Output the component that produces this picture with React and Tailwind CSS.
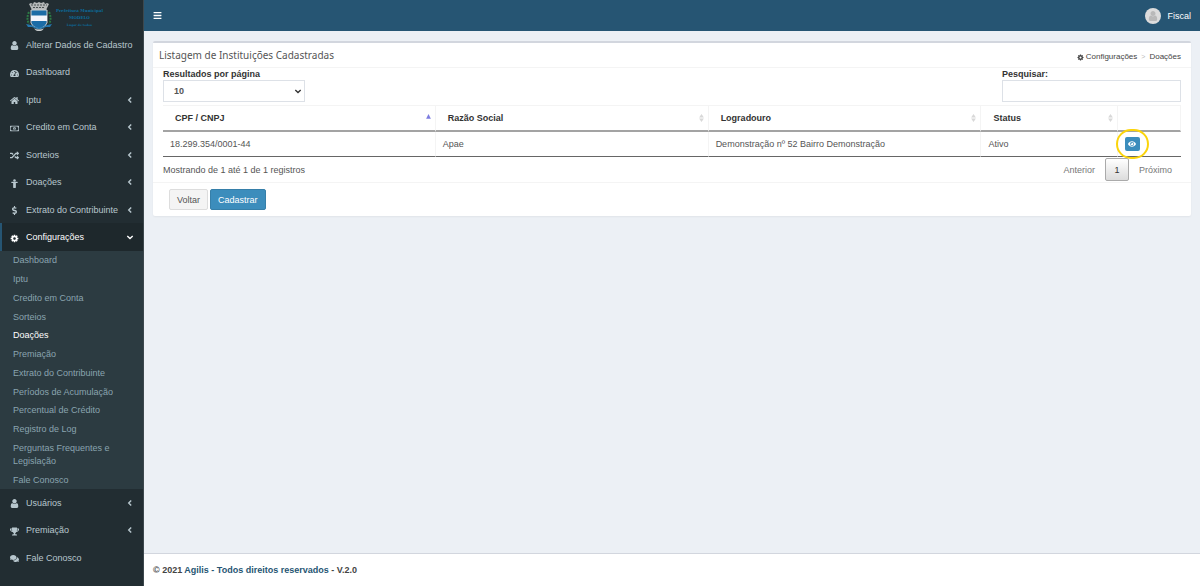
import { useState } from 'react';
import {
  FaBars,
  FaComments,
  FaDollarSign,
  FaEye,
  FaHome,
  FaRandom,
  FaRegMoneyBillAlt,
  FaTachometerAlt,
  FaTrophy,
} from 'react-icons/fa';

function UserIcon({ className }) {
  return (
    <svg viewBox="128 128 1536 1536" fill="currentColor" aria-hidden="true" className={className}>
      <path d="M1536 1399q0 109-62.5 187t-150.5 78h-854q-88 0-150.5-78t-62.5-187q0-85 8.5-160.5t31.5-152 58.5-131 94-89 134.5-34.5q131 128 313 128t313-128q76 0 134.5 34.5t94 89 58.5 131 31.5 152 8.5 160.5zm-256-887q0 159-112.5 271.5t-271.5 112.5-271.5-112.5-112.5-271.5 112.5-271.5 271.5-112.5 271.5 112.5 112.5 271.5z" />
    </svg>
  );
}

function CogIcon({ className }) {
  return (
    <svg viewBox="0 0 1792 1792" fill="currentColor" aria-hidden="true" className={className}>
      <path d="M1152 896q0-106-75-181t-181-75-181 75-75 181 75 181 181 75 181-75 75-181zm512-109v222q0 12-8 23t-20 13l-185 28q-19 54-39 91 35 50 107 138 10 12 10 25t-9 23q-27 37-99 108t-94 71q-12 0-26-9l-138-108q-44 23-91 38-16 136-29 186-7 28-36 28h-222q-14 0-24.5-8.5t-11.5-21.5l-28-184q-49-16-90-37l-141 107q-10 9-25 9-14 0-25-11-126-114-165-168-7-10-7-23 0-12 8-23 15-21 51-66.5t54-70.5q-27-50-41-99l-183-27q-13-2-21-12.5t-8-23.5v-222q0-12 8-23t19-13l186-28q14-46 39-92-40-57-107-138-10-12-10-24 0-10 9-23 26-36 98.5-107.5t94.5-71.5q13 0 26 10l138 107q44-23 91-38 16-136 29-186 7-28 36-28h222q14 0 24.5 8.5t11.5 21.5l28 184q49 16 90 37l142-107q9-9 24-9 13 0 25 10 129 119 165 170 7 8 7 22 0 12-8 23-15 21-51 66.5t-54 70.5q26 50 41 98l183 28q13 2 21 12.5t8 23.5z" />
    </svg>
  );
}

function PersonIcon({ className }) {
  return (
    <svg viewBox="0 0 20 20" fill="currentColor" aria-hidden="true" className={className}>
      <circle cx="10" cy="3.4" r="2.8" />
      <path d="M4 6h12q1.4.3 1.2 1.7-.2 1.3-1.7 1.3H13v10q0 1-1.2 1H8.2Q7 20 7 19V9H4.500Q3 9 2.800 7.700 2.600 6.300 4 6z" />
    </svg>
  );
}

function AngleIcon({ down, className }) {
  return (
    <svg
      viewBox="0 0 10 10"
      fill="none"
      stroke="currentColor"
      strokeWidth="1.4"
      aria-hidden="true"
      className={className}
    >
      <path d={down ? 'M2.300 4L5 6.500 7.700 4' : 'M6.200 2.400L3.700 5l2.500 2.600'} />
    </svg>
  );
}

const MENU = [
  { label: 'Alterar Dados de Cadastro', icon: UserIcon },
  { label: 'Dashboard', icon: FaTachometerAlt },
  { label: 'Iptu', icon: FaHome, expandable: true },
  { label: 'Credito em Conta', icon: FaRegMoneyBillAlt, expandable: true },
  { label: 'Sorteios', icon: FaRandom, expandable: true },
  { label: 'Doações', icon: PersonIcon, expandable: true },
  { label: 'Extrato do Contribuinte', icon: FaDollarSign, expandable: true },
  { label: 'Configurações', icon: CogIcon, expandable: true, active: true },
];

const MENU_BOTTOM = [
  { label: 'Usuários', icon: UserIcon, expandable: true },
  { label: 'Premiação', icon: FaTrophy, expandable: true },
  { label: 'Fale Conosco', icon: FaComments },
];

const SUBMENU = [
  'Dashboard',
  'Iptu',
  'Credito em Conta',
  'Sorteios',
  'Doações',
  'Premiação',
  'Extrato do Contribuinte',
  'Períodos de Acumulação',
  'Percentual de Crédito',
  'Registro de Log',
  'Perguntas Frequentes e Legislação',
  'Fale Conosco',
];

const COLUMNS = [
  { label: 'CPF / CNPJ', width: 'w-[26.8%]', sort: 'asc' },
  { label: 'Razão Social', width: 'w-[26.8%]', sort: 'both' },
  { label: 'Logradouro', width: 'w-[26.8%]', sort: 'both' },
  { label: 'Status', width: 'w-[13.4%]', sort: 'both' },
];

const ROWS = [['18.299.354/0001-44', 'Apae', 'Demonstração nº 52 Bairro Demonstração', 'Ativo']];

function Crest() {
  return (
    <svg viewBox="0 0 26 31" className="h-[31px] w-[26px] shrink-0" aria-hidden="true">
      <path d="M3 4l2-1 2 1 1-2 3 1 2-1 2 1 3-1 1 2 2-1 2 1-3 6H6z" fill="#b4b8b9" />
      <path d="M5 5h16M7 7.500h12" stroke="#4a5254" strokeWidth="1" strokeDasharray="2 1" />
      <path d="M3 12q-3 6 0 12M23 12q3 6 0 12" stroke="#2c7a45" strokeWidth="2" fill="none" strokeDasharray="2 1" />
      <path d="M5 10h16v13q-1 4-8 6-7-2-8-6z" fill="#1c6ca6" stroke="#c9cdce" strokeWidth="1" />
      <path d="M5 15.500h16v5.500H5z" fill="#f3f4fb" />
      <path d="M0 24l5 1q8 5 16 0l5-1-2 3-4 0q-7 4-14 0l-4 0z" fill="#2476ad" />
      <path d="M8 28.500q5 2 10 0l-2 2q-3 1-6 0z" fill="#c9cdce" />
    </svg>
  );
}

function Logo() {
  return (
    <a href="#" className="flex h-[31px] gap-1 pl-[26px] text-[#0b6c9c]">
      <Crest />
      <span className="flex flex-col items-center pt-[7px] font-['DejaVu_Serif',serif] font-bold whitespace-nowrap">
        <span className="text-[4px] leading-[7px]">Prefeitura Municipal</span>
        <span className="text-[4px] leading-[7px]">MODELO</span>
        <span className="text-[3px] leading-[8px]">Lugar de todos</span>
      </span>
    </a>
  );
}

function MenuLink({ item }) {
  const Icon = item.icon;
  return (
    <a
      href="#"
      className={
        item.active
          ? 'flex h-full items-center border-l-2 border-[#265573] bg-[#1e282c] px-2 text-white'
          : 'flex h-full items-center border-l-2 border-transparent px-2 text-[#b8c7ce]'
      }
    >
      <Icon className="mt-0.5 size-[9px] shrink-0" />
      <span className="ml-[7px] grow whitespace-nowrap">{item.label}</span>
      {item.expandable && <AngleIcon down={item.active} className="size-[10px] shrink-0" />}
    </a>
  );
}

function Sidebar() {
  return (
    <aside className="w-36 shrink-0 border-r border-[#3d484d] bg-[#222d32]">
      <Logo />
      <nav>
        <ul>
          {MENU.map((item) => (
            <li key={item.label} className="h-[27px] even:h-7">
              <MenuLink item={item} />
            </li>
          ))}
        </ul>
        <ul className="bg-[#2c3b41]">
          {SUBMENU.map((label) => (
            <li key={label} className="py-[3px] pr-4 pl-[13px] leading-[13px] nth-[4n]:pb-0.5">
              <a href="#" className={label === 'Doações' ? 'text-white' : 'text-[#8aa4af]'}>
                {label}
              </a>
            </li>
          ))}
        </ul>
        <ul>
          {MENU_BOTTOM.map((item) => (
            <li key={item.label} className="h-[27px] even:h-7">
              <MenuLink item={item} />
            </li>
          ))}
        </ul>
      </nav>
    </aside>
  );
}

function TopBar() {
  return (
    <header className="flex h-[31px] items-center justify-between bg-[#265573] px-[9px] text-white">
      <button type="button" aria-label="Menu">
        <FaBars className="size-[9px]" />
      </button>
      <a href="#" className="flex items-center gap-1.5">
        <span className="flex size-4 items-center justify-center rounded-full bg-[#dcdcdc] text-[#b9b9b9]">
          <UserIcon className="size-[10px]" />
        </span>
        Fiscal
      </a>
    </header>
  );
}

function SortIcon({ sort }) {
  return (
    <svg viewBox="0 0 6 10" className="h-2 w-[5px]" aria-hidden="true">
      {sort === 'asc' ? (
        <path d="M0 6h6L3 0z" fill="#7c7ce0" />
      ) : (
        <path d="M0 4.500h6L3 0zM0 5.500h6L3 10z" fill="#d8d8d8" />
      )}
    </svg>
  );
}

function InstitutionsTable() {
  return (
    <table className="w-full table-fixed border-separate border-spacing-0 border-t border-[#f4f4f4] text-left">
      <thead>
        <tr className="h-[26px]">
          {COLUMNS.map((column) => (
            <th
              key={column.label}
              className={`${column.width} border-r border-b-2 border-r-[#f4f4f4] border-b-[#a3a3a3] pr-1 pl-3 text-[#333]`}
            >
              <span className="flex items-center justify-between">
                {column.label}
                <SortIcon sort={column.sort} />
              </span>
            </th>
          ))}
          <th aria-label="Ações" className="border-r border-b-2 border-r-[#f4f4f4] border-b-[#a3a3a3]" />
        </tr>
      </thead>
      <tbody>
        {ROWS.map((row) => (
          <tr key={row[0]} className="h-[25px]">
            {row.map((cell) => (
              <td key={cell} className="border-r border-b border-r-[#f4f4f4] border-b-[#666] pl-[7px]">
                {cell}
              </td>
            ))}
            <td className="border-b border-b-[#666] pl-[7px]">
              <div className="relative w-[15px]">
                <button
                  type="button"
                  aria-label="Visualizar"
                  className="flex h-3.5 w-[15px] items-center justify-center rounded-xs bg-[#3c8dbc] text-white"
                >
                  <FaEye className="size-2" />
                </button>
                <span className="pointer-events-none absolute -inset-x-[9px] -inset-y-2 rounded-full border-2 border-[#fbd40b]" />
              </div>
            </td>
          </tr>
        ))}
      </tbody>
    </table>
  );
}

export default function App() {
  const [pageSize, setPageSize] = useState('10');
  const [search, setSearch] = useState('');

  return (
    <div className="flex min-h-screen bg-[#ecf0f5] font-['Liberation_Sans',Arial,sans-serif] text-[9px] leading-3 text-[#555]">
      <Sidebar />
      <div className="flex min-w-0 grow flex-col">
        <TopBar />
        <main className="grow px-[9px] pt-[10px]">
          <section className="rounded-xs border-t-2 border-[#d2d6de] bg-white shadow-xs">
            <div className="flex h-[25px] items-center justify-between border-b border-[#f4f4f4] pr-[10px] pl-1.5">
              <h1 className="font-['Noto_Sans',sans-serif] text-[10px] text-[#555]">
                Listagem de Instituições Cadastradas
              </h1>
              <nav className="flex items-center gap-1 pt-1 text-[8px] text-[#444]">
                <a href="#" className="flex items-center gap-0.5">
                  <CogIcon className="size-[7px]" />
                  Configurações
                </a>
                <span className="text-[7px] text-[#bbb]">&gt;</span>
                <span>Doações</span>
              </nav>
            </div>

            <div className="border-b border-[#f4f4f4] px-[10px]">
              <div className="flex justify-between text-[#333]">
                <label className="flex flex-col font-bold">
                  Resultados por página
                  <span className="relative flex">
                    <select
                      value={pageSize}
                      onChange={(event) => setPageSize(event.target.value)}
                      className="h-[22px] w-[142px] appearance-none border border-[#dde1e7] bg-white pl-[10px] text-[#555]"
                    >
                      <option>10</option>
                      <option>25</option>
                      <option>50</option>
                      <option>100</option>
                    </select>
                    <AngleIcon down className="pointer-events-none absolute top-1.5 right-0.5 size-[10px]" />
                  </span>
                </label>
                <label className="flex flex-col font-bold">
                  Pesquisar:
                  <input
                    type="search"
                    value={search}
                    onChange={(event) => setSearch(event.target.value)}
                    className="h-[22px] w-[179px] border border-[#dde1e7] px-2 font-normal"
                  />
                </label>
              </div>

              <div className="pt-[3px]">
                <InstitutionsTable />
              </div>

              <div className="flex h-[25px] items-center justify-between">
                <p>Mostrando de 1 até 1 de 1 registros</p>
                <div className="flex items-center text-[#777]">
                  <button type="button" className="px-[10px]">
                    Anterior
                  </button>
                  <button
                    type="button"
                    className="h-[23px] w-6 rounded-xs border border-[#aaa] bg-linear-to-b from-white to-[#dcdcdc] text-[#333]"
                  >
                    1
                  </button>
                  <button type="button" className="pr-[9px] pl-[10px]">
                    Próximo
                  </button>
                </div>
              </div>
            </div>

            <div className="flex gap-0.5 px-4 py-1.5">
              <button type="button" className="h-[21px] rounded-xs border border-[#ddd] bg-[#f4f4f4] px-[7px] text-[#555]">
                Voltar
              </button>
              <button type="button" className="h-[21px] rounded-xs border border-[#367fa9] bg-[#3c8dbc] px-[7px] text-white">
                Cadastrar
              </button>
            </div>
          </section>
        </main>
        <footer className="flex h-[33px] items-center border-t border-[#d2d6de] bg-white px-[9px] font-bold text-[#444]">
          <p>
            © 2021 <a href="#" className="text-[#265573]">Agilis - Todos direitos reservados</a> - V.2.0
          </p>
        </footer>
      </div>
    </div>
  );
}
